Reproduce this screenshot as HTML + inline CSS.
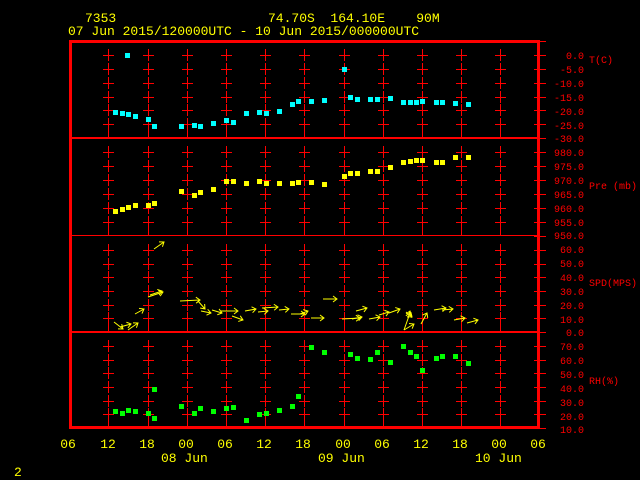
<!DOCTYPE html>
<html><head><meta charset="utf-8"><style>
html,body{margin:0;padding:0;background:#000;width:640px;height:480px;overflow:hidden}
svg{display:block}
.t{font-family:"Liberation Mono",monospace;font-size:13px;fill:#ffff00}
.r{font-family:"Liberation Mono",monospace;font-size:10px;fill:#ff0000}
</style></head><body>
<svg id="s" width="640" height="480" xmlns="http://www.w3.org/2000/svg" shape-rendering="crispEdges">
<rect width="640" height="480" fill="#000"/>
<text class="t" x="85" y="22">7353</text>
<text class="t" x="268" y="22" xml:space="preserve">74.70S  164.10E    90M</text>
<text class="t" x="68" y="35">07 Jun 2015/120000UTC - 10 Jun 2015/000000UTC</text>
<g id="grid" fill="#ff0000"></g>
<rect x="70" y="137" width="469" height="2" fill="#f00"/>
<rect x="70" y="235" width="469" height="1" fill="#f00"/>
<rect x="70" y="331" width="469" height="2" fill="#f00"/>
<rect x="69" y="40" width="3" height="389" fill="#f00"/>
<rect x="537" y="40" width="3" height="389" fill="#f00"/>
<rect x="69" y="40" width="471" height="3" fill="#f00"/>
<rect x="69" y="426" width="471" height="3" fill="#f00"/>
<g class="r" text-anchor="end">
<text x="584" y="59">0.0</text><text x="584" y="73">-5.0</text><text x="584" y="87">-10.0</text><text x="584" y="101">-15.0</text><text x="584" y="115">-20.0</text><text x="584" y="129">-25.0</text><text x="584" y="142">-30.0</text>
<text x="584" y="156">980.0</text><text x="584" y="170">975.0</text><text x="584" y="184">970.0</text><text x="584" y="198">965.0</text><text x="584" y="212">960.0</text><text x="584" y="226">955.0</text><text x="584" y="239">950.0</text>
<text x="584" y="253">60.0</text><text x="584" y="267">50.0</text><text x="584" y="281">40.0</text><text x="584" y="295">30.0</text><text x="584" y="309">20.0</text><text x="584" y="323">10.0</text><text x="584" y="336">0.0</text>
<text x="584" y="350">70.0</text><text x="584" y="364">60.0</text><text x="584" y="378">50.0</text><text x="584" y="392">40.0</text><text x="584" y="406">30.0</text><text x="584" y="420">20.0</text><text x="584" y="433">10.0</text>
</g>
<g class="r">
<text x="589" y="63">T(C)</text>
<text x="589" y="189" xml:space="preserve">Pre (mb)</text>
<text x="589" y="286">SPD(MPS)</text>
<text x="589" y="384">RH(%)</text>
</g>
<g class="t" text-anchor="middle">
<text x="68" y="448">06</text><text x="108" y="448">12</text><text x="147" y="448">18</text><text x="186" y="448">00</text><text x="225" y="448">06</text><text x="264" y="448">12</text><text x="303" y="448">18</text><text x="343" y="448">00</text><text x="382" y="448">06</text><text x="421" y="448">12</text><text x="460" y="448">18</text><text x="499" y="448">00</text><text x="538" y="448">06</text>
</g>
<text class="t" x="161" y="462">08 Jun</text>
<text class="t" x="318" y="462">09 Jun</text>
<text class="t" x="475" y="462">10 Jun</text>
<text class="t" x="14" y="476">2</text>
<g id="pts"></g>
<g id="arr" stroke="#ffff00" stroke-width="1" fill="none" shape-rendering="auto"></g>
</svg>
<script>
var ns="http://www.w3.org/2000/svg";
function el(p,n,a){var e=document.createElementNS(ns,n);for(var k in a)e.setAttribute(k,a[k]);p.appendChild(e);return e;}
var g=document.getElementById('grid');
var panels=[[55,138],[152,236],[250,332],[346,428]];
panels.forEach(function(p){
 var ys=[];for(var i=0;i<6;i++)ys.push(Math.round(p[0]+i*(p[1]-p[0])/6));
 ys.forEach(function(y,i){
  for(var k=0;k<11;k++){var x=Math.round(108.3+39.2*k);
   var y2=(i==5?p[1]:y+6);
   el(g,'rect',{x:x,y:y-6,width:1,height:y2-(y-6)});
   el(g,'rect',{x:x-5,y:y,width:11,height:1});}
  el(g,'rect',{x:534,y:y,width:12,height:1});
 });
 el(g,'rect',{x:534,y:p[1],width:12,height:1});
});
el(g,'rect',{x:534,y:41,width:12,height:1});
var P=document.getElementById('pts');
function pts(list,c){list.forEach(function(q){el(P,'rect',{x:q[0]-2,y:q[1]-2,width:5,height:5,fill:c});});}
pts([[127,55],[115,112],[122,113],[128,114],[135,116],[148,119],[154,126],[181,126],[194,125],[200,126],[213,123],[226,120],[233,122],[246,113],[259,112],[266,113],[279,111],[292,104],[298,101],[311,101],[324,100],[344,69],[350,97],[357,99],[370,99],[377,99],[390,98],[403,102],[410,102],[416,102],[422,101],[436,102],[442,102],[455,103],[468,104]],'#00ffff');
pts([[115,211],[122,209],[128,207],[135,205],[148,205],[154,203],[181,191],[194,195],[200,192],[213,189],[226,181],[233,181],[246,183],[259,181],[266,183],[279,183],[292,183],[298,182],[311,182],[324,184],[344,176],[350,173],[357,173],[370,171],[377,171],[390,167],[403,162],[410,161],[416,160],[422,160],[436,162],[442,162],[455,157],[468,157]],'#ffff00');
pts([[115,411],[122,413],[128,410],[135,411],[154,389],[148,413],[154,418],[181,406],[194,413],[200,408],[213,411],[226,408],[233,407],[246,420],[259,414],[266,413],[279,410],[292,406],[298,396],[311,347],[324,352],[350,354],[357,358],[370,359],[377,352],[390,362],[403,346],[410,352],[416,356],[422,370],[436,358],[442,356],[455,356],[468,363]],'#00ff00');
var A=document.getElementById('arr');
function ar(x1,y1,x2,y2){var dx=x2-x1,dy=y2-y1,L=Math.sqrt(dx*dx+dy*dy),ux=dx/L,uy=dy/L,h=5;
 var ax=x2-h*(ux*0.8-uy*0.6),ay=y2-h*(uy*0.8+ux*0.6),bx=x2-h*(ux*0.8+uy*0.6),by=y2-h*(uy*0.8-ux*0.6);
 el(A,'path',{d:'M'+x1+' '+y1+'L'+x2+' '+y2+'M'+ax+' '+ay+'L'+x2+' '+y2+'L'+bx+' '+by});}
[[154,249,164,242],[148,297,163,292],[150,295,162,291],[135,314,144,309],[114,322,123,329],[120,327,131,324],[128,330,138,323],[180,301,200,300],[198,301,205,309],[201,311,211,313],[212,310,222,313],[221,311,238,311],[232,316,243,320],[245,311,256,309],[258,312,268,311],[262,308,278,307],[279,310,289,309],[291,314,305,314],[300,314,308,311],[311,318,324,318],[323,299,337,299],[342,319,360,318],[352,319,362,317],[356,311,367,308],[369,319,380,317],[379,315,389,312],[389,313,400,309],[404,330,410,313],[408,318,410,311],[406,312,412,317],[404,330,414,324],[421,324,427,313],[434,310,446,308],[442,310,453,309],[454,320,465,318],[467,323,478,320]].forEach(function(a){ar.apply(null,a);});
</script>
</body></html>
